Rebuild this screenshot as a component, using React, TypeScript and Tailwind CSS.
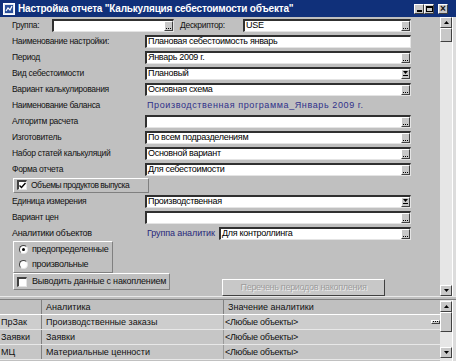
import { clsx } from 'clsx'

const font = "font-['Liberation_Sans',Arial,sans-serif]"

const rows: { label: string; value?: string; btn?: 'dots' | 'drop' | 'none'; text?: string }[] = [
  { label: 'Наименование настройки:', value: 'Плановая себестоимость январь', btn: 'none' },
  { label: 'Период', value: 'Январь 2009 г.', btn: 'dots' },
  { label: 'Вид себестоимости', value: 'Плановый', btn: 'drop' },
  { label: 'Вариант калькулирования', value: 'Основная схема', btn: 'dots' },
  { label: 'Наименование баланса', text: 'Производственная программа_Январь 2009 г.' },
  { label: 'Алгоритм расчета', value: '', btn: 'dots' },
  { label: 'Изготовитель', value: 'По всем подразделениям', btn: 'dots' },
  { label: 'Набор статей калькуляций', value: 'Основной вариант', btn: 'dots' },
  { label: 'Форма отчета', value: 'Для себестоимости', btn: 'dots' },
]

const rows2: typeof rows = [
  { label: 'Единица измерения', value: 'Производственная', btn: 'drop' },
  { label: 'Вариант цен', value: '', btn: 'dots' },
]

const gridRows = [
  { code: 'ПрЗак', name: 'Производственные заказы', value: '<Любые объекты>', btn: true },
  { code: 'Заявки', name: 'Заявки', value: '<Любые объекты>' },
  { code: 'МЦ', name: 'Материальные ценности', value: '<Любые объекты>' },
]

const raised = 'border border-t-white border-l-white border-b-[#404040] border-r-[#404040]'
const etched = 'border border-t-white border-l-white border-b-[#808080] border-r-[#808080]'

export default function App() {
  return (
    <div
      className={clsx(
        'w-[456px] h-[361px] bg-[#c0c0c0] flex flex-col overflow-hidden text-[9px] tracking-[-0.3px] leading-none text-[#111] whitespace-nowrap',
        font
      )}
    >
      {/* Title bar */}
      <div className="h-[17px] shrink-0 bg-[#10307a] flex items-center pl-[3px] pr-[8px]">
        <AppIcon />
        <span className="ml-[3px] text-white font-bold text-[10px] tracking-[-0.2px]">
          Настройка отчета "Калькуляция себестоимости объекта"
        </span>
        <div className="ml-auto flex items-center">
          <TitleButton>
            <div className="w-[5px] h-[2px] bg-black mt-[5px]" />
          </TitleButton>
          <TitleButton>
            <div className="w-[7px] h-[6px] border border-black border-t-2" />
          </TitleButton>
          <TitleButton className="ml-[4px]">
            <span className="font-bold text-[10px] leading-none tracking-normal">×</span>
          </TitleButton>
        </div>
      </div>

      {/* Form area */}
      <div className="h-[279px] shrink-0 flex">
        <div className="flex-1 pl-[12px] flex flex-col">
          {/* Группа / Дескриптор */}
          <div className="h-[16px] flex items-center">
            <span className="w-[40px] text-[8.5px]">Группа:</span>
            <Field className="w-[122px]" btn="dots" value="" />
            <span className="w-[63px] ml-[6px] text-[8.5px]">Дескриптор:</span>
            <Field className="w-[168px]" btn="dots" value="USE" />
          </div>

          {rows.map((r) => (
            <FormRow key={r.label} {...r} />
          ))}

          <div className="h-[16px] flex items-center">
            <div className={clsx('w-[136px] h-[15px] shrink-0 overflow-hidden flex items-center pl-[3px] ml-[1px]', etched)}>
              <CheckBox checked />
              <span className="ml-[4px] text-[8.5px] tracking-[-0.5px]">Объемы продуктов выпуска</span>
            </div>
          </div>

          {rows2.map((r) => (
            <FormRow key={r.label} {...r} />
          ))}

          <div className="h-[16px] flex items-center">
            <span className="w-[135px]">Аналитики объектов</span>
            <span className="text-[#28287a] w-[72px] tracking-[-0.1px]">Группа аналитик</span>
            <Field className="w-[192px]" btn="dots" value="Для контроллинга" />
          </div>

          <div className="flex">
            <div className="flex flex-col ml-[1px]">
              <div className={clsx('w-[100px] h-[32px] flex flex-col', etched)}>
                <div className="h-[15px] flex items-center pl-[5px]">
                  <Radio checked />
                  <span className="ml-[4px]">предопределенные</span>
                </div>
                <div className="h-[15px] flex items-center pl-[5px]">
                  <Radio />
                  <span className="ml-[4px]">произвольные</span>
                </div>
              </div>
              <div className={clsx('w-[157px] h-[17px] flex items-center pl-[3px] overflow-hidden', etched)}>
                <CheckBox />
                <span className="ml-[5px] text-[9px] tracking-[-0.2px]">Выводить данные с накоплением</span>
              </div>
            </div>
            <div className="ml-[52px] mt-[38px]">
              <div className={clsx('w-[163px] h-[17px] bg-[#c8c8c8] flex items-center justify-center', raised)}>
                <span className="text-[#9c9c9c] [text-shadow:1px_1px_0_#eeeeee]">Перечень периодов накопления</span>
              </div>
            </div>
          </div>
        </div>

        {/* Main scrollbar */}
        <div className="w-[12px] ml-[1px] bg-[#e6e6e6] flex flex-col">
          <ScrollBtn up />
          <div className={clsx('h-[14px] bg-[#c8c8c8]', raised)} />
          <div className="flex-1" />
          <ScrollBtn />
        </div>
        <div className="w-[4px] bg-[#dcdcdc] border-l border-white" />
      </div>

      {/* Splitter */}
      <div className="h-[3px] shrink-0 border-t border-[#e8e8e8] bg-[#c0c0c0]" />

      {/* Grid */}
      <div className="flex-1 flex border-t border-[#808080] tracking-normal">
        <div className="w-[440px] flex flex-col">
          <div className="h-[15px] flex bg-[#c0c0c0] border-b border-white">
            <div className="w-[42px] border-r border-[#808080]" />
            <div className="w-[182px] pl-[4px] flex items-center border-r border-[#808080]">Аналитика</div>
            <div className="flex-1 pl-[4px] flex items-center">Значение аналитики</div>
          </div>
          {gridRows.map((g, i) => (
            <div
              key={g.code}
              className={clsx('h-[15px] flex border-b border-[#e8e8e8]', i === 0 ? 'bg-[#cdcdcd]' : 'bg-[#c6c6c6]')}
            >
              <div className="w-[42px] pl-[1px] flex items-center border-r border-[#808080]">{g.code}</div>
              <div className="w-[182px] pl-[4px] flex items-center border-r border-[#9a9a9a]">{g.name}</div>
              <div className="flex-1 pl-[1px] flex items-center tracking-[-0.3px]">
                <span className="flex-1">{g.value}</span>
                {g.btn && <DotsButton />}
              </div>
            </div>
          ))}
        </div>
        <div className="w-[12px] bg-[#e6e6e6] flex flex-col pt-[1px]">
          <ScrollBtn up />
          <div className={clsx('h-[20px] bg-[#c8c8c8]', raised)} />
          <div className="flex-1" />
          <ScrollBtn />
          <div className="h-[3px]" />
        </div>
        <div className="w-[4px] bg-[#dcdcdc] border-l border-white" />
      </div>
    </div>
  )
}

function FormRow({ label, value, btn, text }: { label: string; value?: string; btn?: 'dots' | 'drop' | 'none'; text?: string }) {
  return (
    <div className="h-[16px] flex items-center">
      <span className="w-[133px] text-[8.5px]">{label}</span>
      {text !== undefined ? (
        <span className="ml-[2px] text-[#30308a] text-[9px] tracking-[0.6px]">{text}</span>
      ) : (
        <Field className="w-[266px]" btn={btn} value={value ?? ''} />
      )}
    </div>
  )
}

function Field({ value, btn, className }: { value: string; btn?: 'dots' | 'drop' | 'none'; className?: string }) {
  return (
    <div
      className={clsx(
        'h-[13px] bg-white flex items-stretch border-t-2 border-l-2 border-t-[#303030] border-l-[#303030] border-b border-r border-b-[#e4e4e4] border-r-[#e4e4e4]',
        className
      )}
    >
      <span className="flex-1 pl-[1px] flex items-center overflow-hidden text-black">{value}</span>
      {btn === 'dots' && <DotsButton />}
      {btn === 'drop' && <DropButton />}
    </div>
  )
}

function DotsButton() {
  return (
    <div className={clsx('w-[9px] shrink-0 bg-[#c8c8c8] flex items-end justify-center gap-[1px] pb-[1px]', raised)}>
      <div className="w-[1px] h-[1px] bg-black" />
      <div className="w-[1px] h-[1px] bg-black" />
      <div className="w-[1px] h-[1px] bg-black" />
    </div>
  )
}

function DropButton() {
  return (
    <div className={clsx('w-[9px] shrink-0 bg-[#c8c8c8] flex items-center justify-center', raised)}>
      <svg width="5" height="6" viewBox="0 0 5 6">
        <path d="M0 0h5L2.5 3z" fill="#000" />
        <rect x="0" y="4" width="5" height="1" fill="#000" />
      </svg>
    </div>
  )
}

function ScrollBtn({ up }: { up?: boolean }) {
  return (
    <div className={clsx('h-[11px] bg-[#c8c8c8] flex items-center justify-center shrink-0', raised)}>
      <svg width="5" height="3" viewBox="0 0 5 3">
        <path d={up ? 'M0 3h5L2.5 0z' : 'M0 0h5L2.5 3z'} fill="#000" />
      </svg>
    </div>
  )
}

function TitleButton({ children, className }: { children: React.ReactNode; className?: string }) {
  return (
    <div className={clsx('w-[10px] h-[10px] bg-[#c8c8c8] flex items-center justify-center', raised, className)}>
      {children}
    </div>
  )
}

function CheckBox({ checked }: { checked?: boolean }) {
  return (
    <div className="w-[10px] h-[10px] shrink-0 bg-white border-t-2 border-l-2 border-t-[#404040] border-l-[#404040] border-b border-r border-b-[#e4e4e4] border-r-[#e4e4e4] flex items-center justify-center">
      {checked && (
        <svg width="7" height="7" viewBox="0 0 7 7">
          <path d="M0.5 3.5l2 2 4-4.5" stroke="#000" strokeWidth="1.4" fill="none" />
        </svg>
      )}
    </div>
  )
}

function Radio({ checked }: { checked?: boolean }) {
  return (
    <div className="w-[9px] h-[9px] rounded-full bg-white border border-t-[#404040] border-l-[#404040] border-b-[#e4e4e4] border-r-[#e4e4e4] flex items-center justify-center">
      {checked && <div className="w-[3px] h-[3px] rounded-full bg-black" />}
    </div>
  )
}

function AppIcon() {
  return (
    <svg width="12" height="12" viewBox="0 0 12 12">
      <rect x="0.5" y="0.5" width="11" height="11" fill="#dfe8f5" stroke="#ffffff" />
      <rect x="2" y="2" width="8" height="8" fill="#2a4f9a" />
      <path d="M3 8l2-3 2 2 2-4" stroke="#ffffff" strokeWidth="1.2" fill="none" />
    </svg>
  )
}
